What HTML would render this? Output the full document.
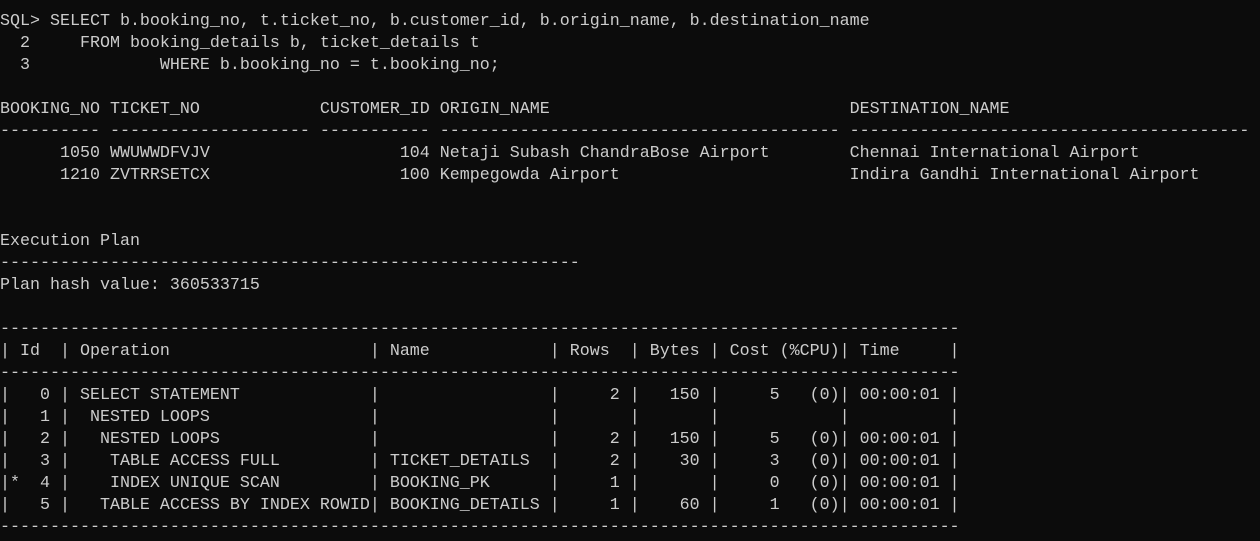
<!DOCTYPE html>
<html><head><style>
html,body{margin:0;padding:0;background:#0c0c0c;width:1260px;height:541px;overflow:hidden}
pre{margin:0;position:absolute;left:0;top:11px;font-family:"Liberation Mono",monospace;font-size:16.667px;line-height:22px;color:#cccccc;white-space:pre}
</style></head><body>
<pre>SQL&gt; SELECT b.booking_no, t.ticket_no, b.customer_id, b.origin_name, b.destination_name
  2     FROM booking_details b, ticket_details t
  3             WHERE b.booking_no = t.booking_no;

BOOKING_NO TICKET_NO            CUSTOMER_ID ORIGIN_NAME                              DESTINATION_NAME
---------- -------------------- ----------- ---------------------------------------- ----------------------------------------
      1050 WWUWWDFVJV                   104 Netaji Subash ChandraBose Airport        Chennai International Airport
      1210 ZVTRRSETCX                   100 Kempegowda Airport                       Indira Gandhi International Airport


Execution Plan
----------------------------------------------------------
Plan hash value: 360533715

------------------------------------------------------------------------------------------------
| Id  | Operation                    | Name            | Rows  | Bytes | Cost (%CPU)| Time     |
------------------------------------------------------------------------------------------------
|   0 | SELECT STATEMENT             |                 |     2 |   150 |     5   (0)| 00:00:01 |
|   1 |  NESTED LOOPS                |                 |       |       |            |          |
|   2 |   NESTED LOOPS               |                 |     2 |   150 |     5   (0)| 00:00:01 |
|   3 |    TABLE ACCESS FULL         | TICKET_DETAILS  |     2 |    30 |     3   (0)| 00:00:01 |
|*  4 |    INDEX UNIQUE SCAN         | BOOKING_PK      |     1 |       |     0   (0)| 00:00:01 |
|   5 |   TABLE ACCESS BY INDEX ROWID| BOOKING_DETAILS |     1 |    60 |     1   (0)| 00:00:01 |
------------------------------------------------------------------------------------------------</pre>
</body></html>
